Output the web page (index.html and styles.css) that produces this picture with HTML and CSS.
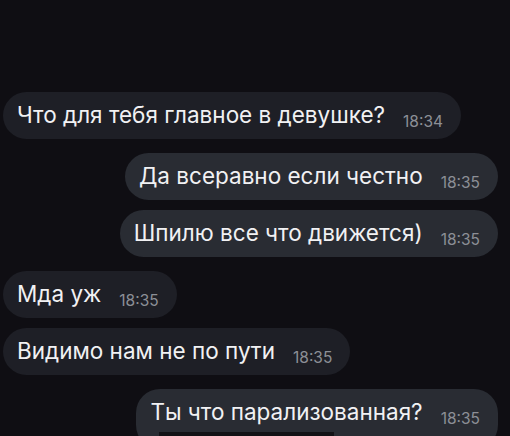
FILE: index.html
```html
<!DOCTYPE html>
<html lang="ru">
<head>
    <meta charset="UTF-8">
    <meta name="viewport" content="width=device-width, initial-scale=1.0">
    <title>Чат</title>
    <link rel="stylesheet" href="styles.css">
</head>
<body>

    <div class="chat">
        <div class="row in">
            <div class="bubble">Что для тебя главное в девушке?<span class="time">18:34</span></div>
        </div>

        <div class="row out group">
            <div class="bubble">Да всеравно если честно<span class="time">18:35</span></div>
        </div>
        <div class="row out">
            <div class="bubble">Шпилю все что движется)<span class="time">18:35</span></div>
        </div>

        <div class="row in group">
            <div class="bubble">Мда уж<span class="time">18:35</span></div>
        </div>
        <div class="row in">
            <div class="bubble">Видимо нам не по пути<span class="time">18:35</span></div>
        </div>

        <div class="row out group">
            <div class="bubble last">Ты что парализованная?<span class="time">18:35</span>
                <div class="cut"></div>
            </div>
        </div>
    </div>

</body>
</html>
```

FILE: styles.css
```css
body {
    margin: 0;
    background-color: #0f0e13;
    font-family: Inter, Roboto, "Liberation Sans", sans-serif;
    overflow: hidden;
}
.chat {
    display: flex;
    flex-direction: column;
    gap: 10px;
    padding: 92px 12px 0 3px;
    height: 436px;
    box-sizing: border-box;
}
.row {
    display: flex;
}
.row.group {
    margin-top: 4px;
}
.row.in {
    justify-content: flex-start;
}
.row.out {
    justify-content: flex-end;
}
.bubble {
    position: relative;
    display: flex;
    align-items: baseline;
    height: 47px;
    box-sizing: border-box;
    padding: 9px 18px 0 14px;
    border-radius: 24px;
    font-size: 22.5px;
    color: #f1f1f3;
    white-space: nowrap;
}
.in .bubble {
    background-color: #1e1f26;
}
.out .bubble {
    background-color: #292c33;
}
.time {
    margin-left: 18px;
    font-size: 15.5px;
    color: #8c8f96;
    position: relative;
    top: 4px;
}
.bubble.last {
    height: 60px;
}
.cut {
    position: absolute;
    left: 23px;
    bottom: 0;
    width: 175px;
    height: 17px;
    background-color: #121216;
}
```
